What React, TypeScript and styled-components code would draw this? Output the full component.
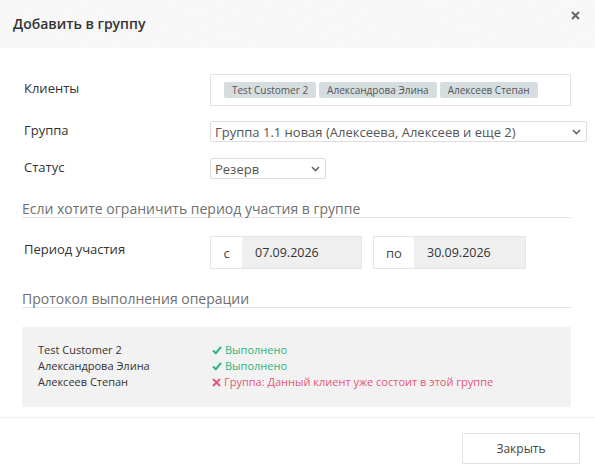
import React from "react";
import styled, { createGlobalStyle } from "styled-components";

const Global = createGlobalStyle`
  html, body { margin: 0; padding: 0; background: #fff; }
  body { font-family: "Open Sans", "Noto Sans", sans-serif; color: #333; }
  * { box-sizing: border-box; }
`;

const Dialog = styled.div`
  width: 595px;
  height: 474px;
  background: #fff;
  display: flex;
  flex-direction: column;
  overflow: hidden;
`;

const Header = styled.div`
  height: 48px;
  display: flex;
  align-items: center;
  justify-content: space-between;
  padding: 0 13px 0 13px;
  background-color: #f8f8f8;
  background-image: repeating-linear-gradient(
    -55deg,
    rgba(0, 0, 0, 0) 0px,
    rgba(0, 0, 0, 0) 7px,
    rgba(0, 0, 0, 0.012) 7px,
    rgba(0, 0, 0, 0.012) 8px
  );
`;

const Title = styled.h4`
  margin: 0;
  font-size: 14px;
  font-weight: 600;
  color: #333;
  padding-bottom: 2px;
`;

const Close = styled.button`
  border: 0;
  background: none;
  padding: 0;
  width: 12px;
  height: 12px;
  margin-top: -17px;
  margin-right: 1px;
  display: flex;
  align-items: center;
  justify-content: center;
  cursor: pointer;
`;

const Body = styled.div`
  padding: 26px 24px 0 22px;
  display: flex;
  flex-direction: column;
`;

const FormRow = styled.div<{ $gap?: number }>`
  display: grid;
  grid-template-columns: 188px 1fr;
  align-items: start;
  margin-bottom: ${(p) => p.$gap ?? 0}px;
`;

const Label = styled.label<{ $top: number }>`
  font-size: 13px;
  color: #333;
  padding-left: 2px;
  padding-top: ${(p) => p.$top}px;
  line-height: 16px;
`;

const TagBox = styled.div`
  height: 32px;
  border: 1px solid #e3e3e3;
  display: flex;
  align-items: center;
  gap: 3px;
  padding: 0 13px;
`;

const Tag = styled.span`
  background: #d6dde1;
  border-radius: 2px;
  height: 16px;
  display: inline-flex;
  align-items: center;
  padding: 0 8px;
  font-size: 10px;
  color: #555;
  white-space: nowrap;
`;

const Select = styled.div<{ $width: string }>`
  width: ${(p) => p.$width};
  height: 21px;
  border: 1px solid #ddd;
  border-radius: 2px;
  display: flex;
  align-items: center;
  justify-content: space-between;
  padding: 0 5px 0 4px;
  font-size: 13px;
  color: #555;
  background: #fff;
  white-space: nowrap;
`;

const Chevron = () => (
  <svg width="9" height="6" viewBox="0 0 9 6">
    <path d="M1 1 L4.5 4.5 L8 1" fill="none" stroke="#666" strokeWidth="1.6" />
  </svg>
);

const SectionTitle = styled.div<{ $mt: number; $mb: number }>`
  font-size: 14px;
  color: #6f6f6f;
  line-height: 17px;
  border-bottom: 1px solid #e5e5e5;
  margin-top: ${(p) => p.$mt}px;
  margin-bottom: ${(p) => p.$mb}px;
`;

const DateGroups = styled.div`
  display: flex;
  gap: 11px;
`;

const DateGroup = styled.div`
  display: flex;
  height: 33px;
  border: 1px solid #e6e6e6;
`;

const Addon = styled.span<{ $w: number }>`
  width: ${(p) => p.$w}px;
  display: flex;
  align-items: center;
  justify-content: center;
  font-size: 13px;
  color: #444;
  background: #fff;
`;

const DateValue = styled.span<{ $w: number }>`
  width: ${(p) => p.$w}px;
  display: flex;
  align-items: center;
  padding-left: 13px;
  background: #efefef;
  font-size: 12.5px;
  color: #333;
`;

const LogBox = styled.div`
  background: #f2f2f2;
  padding: 15px 16px 17px 16px;
  display: grid;
  grid-template-columns: 174px 1fr;
  grid-auto-rows: 16px;
  font-size: 11px;
  line-height: 16px;
  margin-bottom: 10px;
`;

const LogName = styled.span`
  color: #333;
`;

const LogStatus = styled.span<{ $ok: boolean }>`
  color: ${(p) => (p.$ok ? "#2bb67d" : "#e5567a")};
  display: flex;
  align-items: center;
  gap: 3px;
  height: 16px;
`;

const Footer = styled.div`
  border-top: 1px solid #efefef;
  display: flex;
  justify-content: flex-end;
  padding: 15px 15px 0 0;
`;

const Button = styled.button`
  width: 118px;
  height: 31px;
  background: #fff;
  border: 1px solid #e2e2e2;
  font-family: "Open Sans", sans-serif;
  font-size: 12px;
  color: #444;
  cursor: pointer;
`;

const Check = () => (
  <svg width="10" height="10" viewBox="0 0 10 10">
    <path d="M1 5.5 L3.8 8.2 L9 1.8" fill="none" stroke="#2bb67d" strokeWidth="2" />
  </svg>
);

const Cross = () => (
  <svg width="9" height="9" viewBox="0 0 9 9">
    <path d="M1 1 L8 8 M8 1 L1 8" fill="none" stroke="#e5567a" strokeWidth="1.9" />
  </svg>
);

const log = [
  { name: "Test Customer 2", ok: true, text: "Выполнено" },
  { name: "Александрова Элина", ok: true, text: "Выполнено" },
  { name: "Алексеев Степан", ok: false, text: "Группа: Данный клиент уже состоит в этой группе" },
];

export default function App() {
  return (
    <>
      <Global />
      <Dialog>
        <Header>
          <Title>Добавить в группу</Title>
          <Close aria-label="Закрыть">
            <svg width="9" height="9" viewBox="0 0 9 9">
              <path d="M1 1 L8 8 M8 1 L1 8" stroke="#666" strokeWidth="2" />
            </svg>
          </Close>
        </Header>
        <Body>
          <FormRow $gap={15}>
            <Label $top={6}>Клиенты</Label>
            <TagBox>
              <Tag>Test Customer 2</Tag>
              <Tag>Александрова Элина</Tag>
              <Tag>Алексеев Степан</Tag>
            </TagBox>
          </FormRow>
          <FormRow $gap={16}>
            <Label $top={1}>Группа</Label>
            <Select $width="calc(100% + 16px)">
              Группа 1.1 новая (Алексеева, Алексеев и еще 2)
              <Chevron />
            </Select>
          </FormRow>
          <FormRow>
            <Label $top={1}>Статус</Label>
            <Select $width="116px">
              Резерв
              <Chevron />
            </Select>
          </FormRow>
          <SectionTitle $mt={21} $mb={18}>
            Если хотите ограничить период участия в группе
          </SectionTitle>
          <FormRow>
            <Label $top={5}>Период участия</Label>
            <DateGroups>
              <DateGroup>
                <Addon $w={31}>с</Addon>
                <DateValue $w={119}>07.09.2026</DateValue>
              </DateGroup>
              <DateGroup>
                <Addon $w={40}>по</Addon>
                <DateValue $w={111}>30.09.2026</DateValue>
              </DateGroup>
            </DateGroups>
          </FormRow>
          <SectionTitle $mt={21} $mb={19}>
            Протокол выполнения операции
          </SectionTitle>
          <LogBox>
            {log.map((r) => (
              <React.Fragment key={r.name}>
                <LogName>{r.name}</LogName>
                <LogStatus $ok={r.ok}>
                  {r.ok ? <Check /> : <Cross />}
                  {r.text}
                </LogStatus>
              </React.Fragment>
            ))}
          </LogBox>
        </Body>
        <Footer>
          <Button>Закрыть</Button>
        </Footer>
      </Dialog>
    </>
  );
}
